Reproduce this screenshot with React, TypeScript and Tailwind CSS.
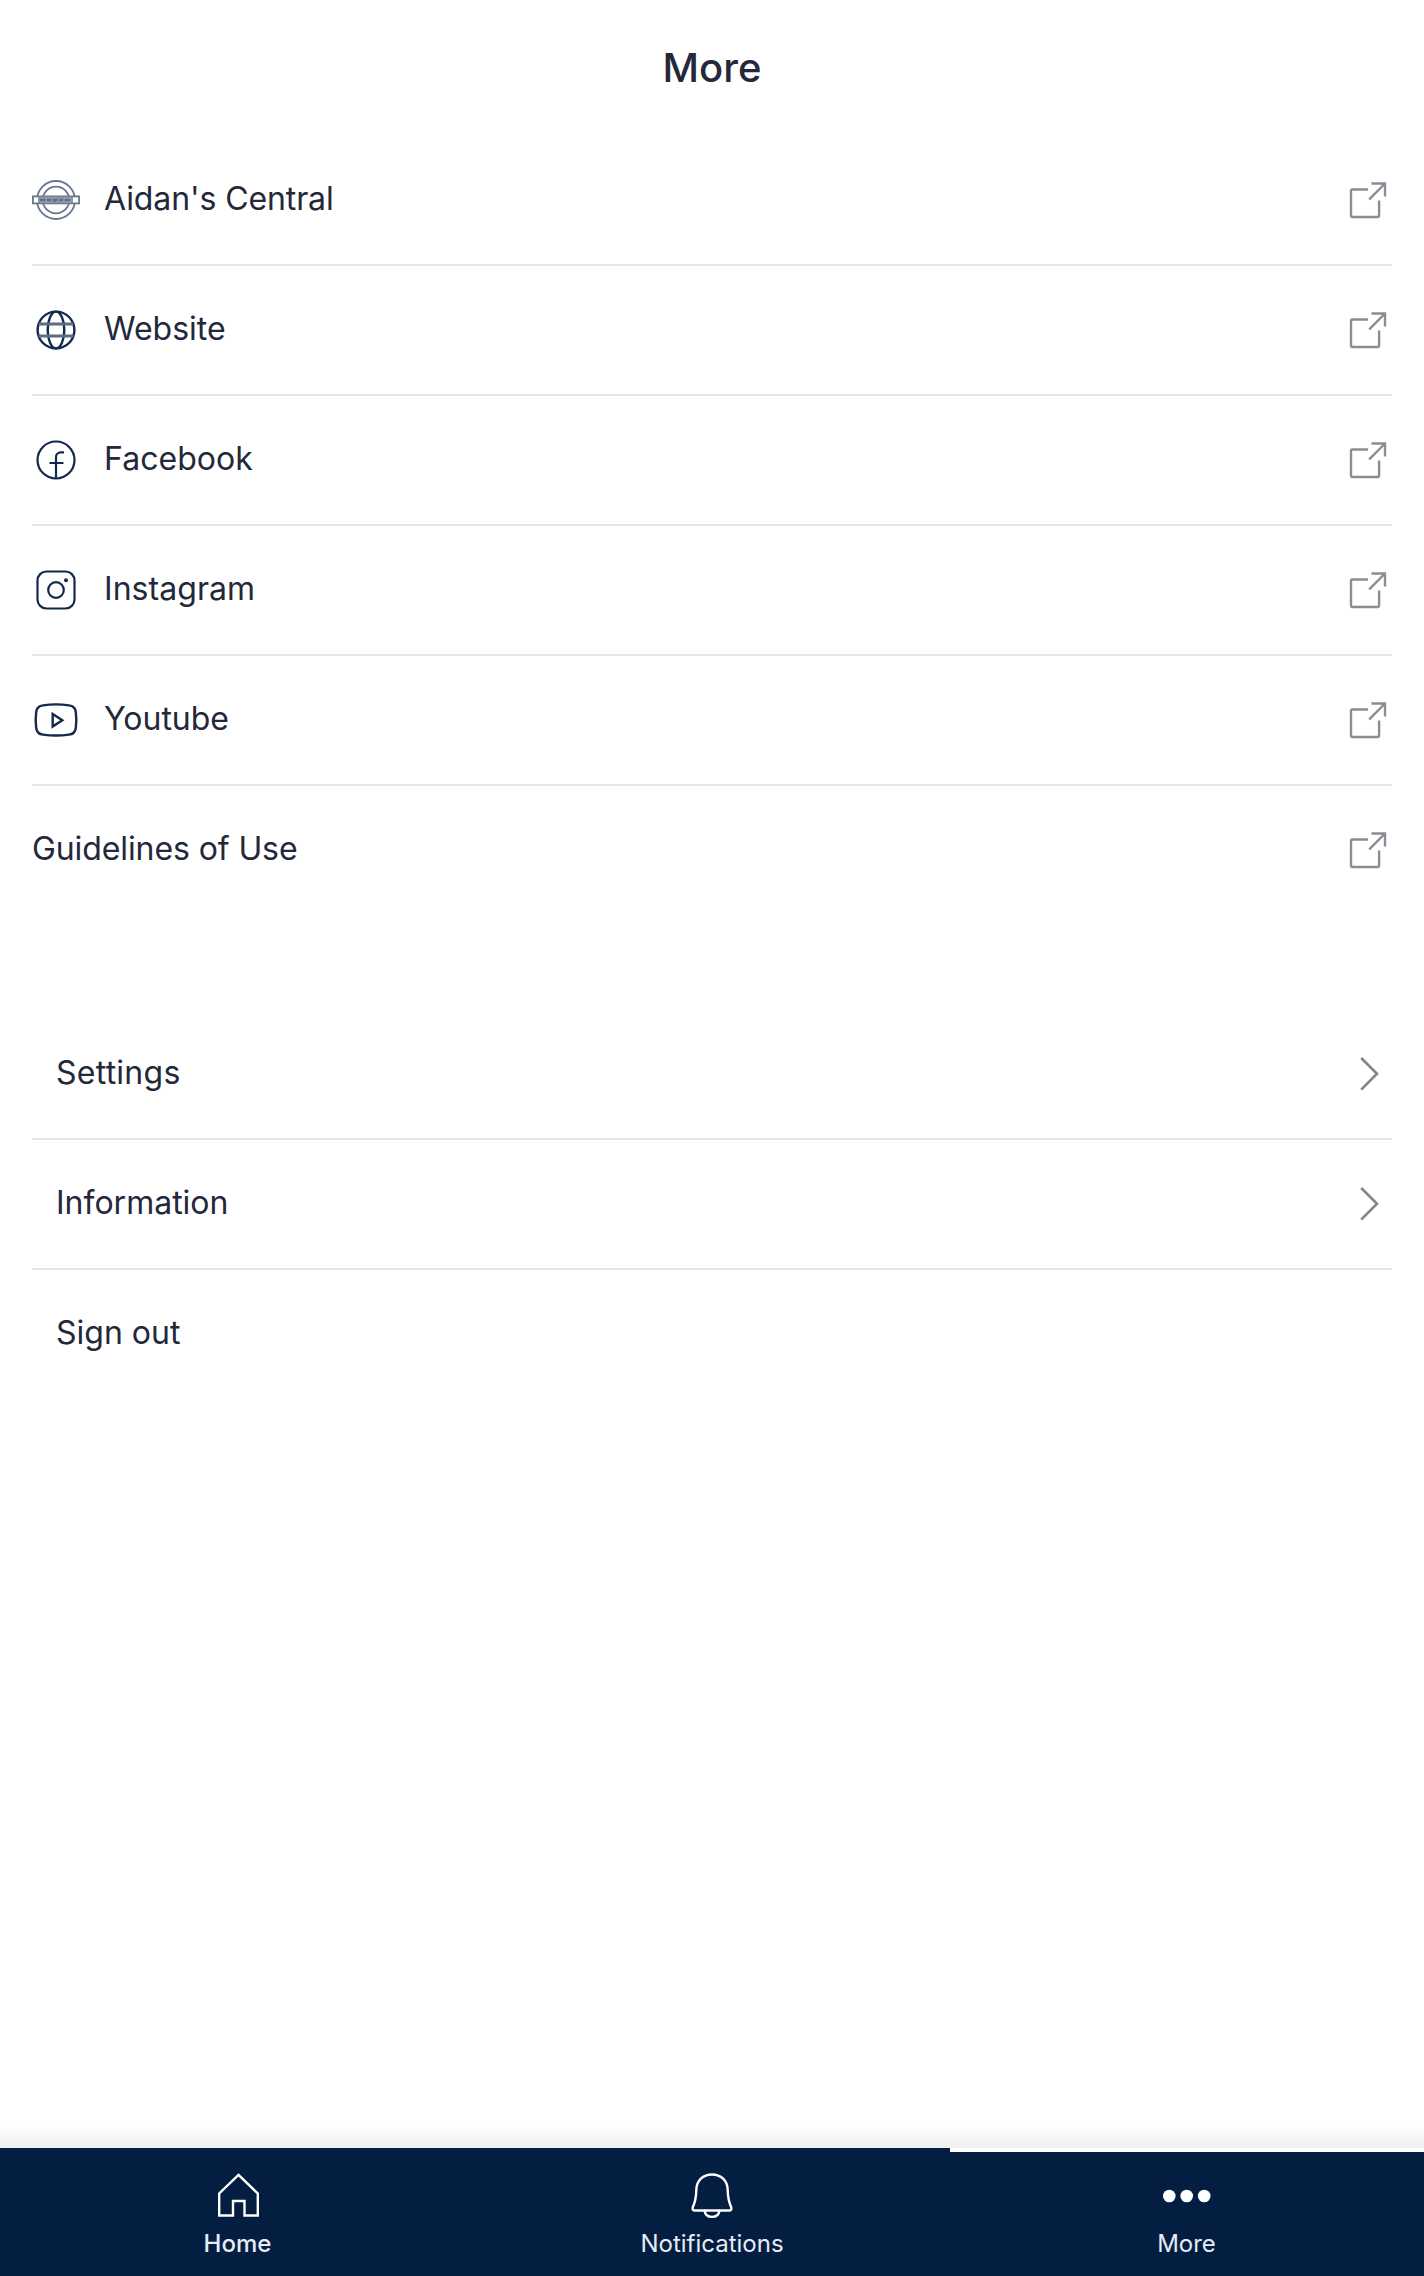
import type { ReactNode } from "react";

function Icon({ children, className = "", sw = 2.4 }: { children: ReactNode; className?: string; sw?: number }) {
  return (
    <svg
      width="48"
      height="48"
      viewBox="0 0 48 48"
      fill="none"
      stroke="currentColor"
      strokeWidth={sw}
      className={"shrink-0 " + className}
    >
      {children}
    </svg>
  );
}

const crest = (
  <Icon className="text-[#67778b]" sw={1.8}>
    <circle cx="24" cy="24" r="19" />
    <circle cx="24" cy="24" r="13.3" />
    <rect x="0.9" y="20.4" width="46.2" height="7" fill="white" />
    <rect x="6" y="20.6" width="35" height="6.6" fill="#8996a6" stroke="none" />
    <path d="M8 24h5M15 24h4M21 23l2 2 2-2M27 24h4M33 24h5" stroke="#5c6d82" strokeWidth="2" />
  </Icon>
);
const globe = (
  <Icon className="text-[#13294b]">
    <circle cx="24" cy="24" r="18.4" />
    <ellipse cx="24" cy="24" rx="8.3" ry="18.4" />
    <path d="M6.5 18h35M6.5 30h35" stroke="#5d6b81" strokeWidth="3" />
  </Icon>
);
const facebook = (
  <Icon className="text-[#13294b]" sw={2.2}>
    <circle cx="24" cy="24" r="18.5" />
    <path d="M24 42.5V21a4.6 4.6 0 0 1 4.6-4.6H32M17.5 27h14" />
  </Icon>
);
const instagram = (
  <Icon className="text-[#13294b]" sw={2.2}>
    <rect x="5.5" y="5.5" width="37" height="37" rx="9" />
    <circle cx="24" cy="24" r="7.8" />
    <circle cx="34" cy="14.2" r="2" fill="currentColor" stroke="none" />
  </Icon>
);
const youtube = (
  <Icon className="text-[#13294b]">
    <path d="M11 9.4Q24 7.4 37 9.4Q43 10 43.8 16Q44.9 24 43.8 32Q43 38 37 38.6Q24 40.4 11 38.6Q5 38 4.2 32Q3.1 24 4.2 16Q5 10 11 9.4Z" />
    <path d="M20.7 18v12.6l9.6-6.3Z" />
  </Icon>
);

function ExternalIcon() {
  return (
    <Icon className="text-[#8b8d95]">
      <path d="M24 13.5H8.2a1.2 1.2 0 0 0-1.2 1.2v25.1a1.2 1.2 0 0 0 1.2 1.2h25.7a1.2 1.2 0 0 0 1.2-1.2V24.5" />
      <path d="M27.5 7.5H41V20.5M40.5 8L25.2 23.3" />
    </Icon>
  );
}

function ChevronIcon() {
  return (
    <Icon className="text-[#85878f]" sw={2.7}>
      <path d="M17.2 8L33 23.8L17.2 39.6" />
    </Icon>
  );
}

const links: { label: string; icon?: ReactNode; tracking: string }[] = [
  { label: "Aidan's Central", icon: crest, tracking: "tracking-[-0.1px]" },
  { label: "Website", icon: globe, tracking: "tracking-normal" },
  { label: "Facebook", icon: facebook, tracking: "tracking-[0.05px]" },
  { label: "Instagram", icon: instagram, tracking: "tracking-[0.05px]" },
  { label: "Youtube", icon: youtube, tracking: "tracking-normal" },
  { label: "Guidelines of Use", tracking: "tracking-[-0.1px]" },
];

const actions = [
  { label: "Settings", chevron: true, tracking: "tracking-[0.25px]" },
  { label: "Information", chevron: true, tracking: "tracking-normal" },
  { label: "Sign out", chevron: false, tracking: "tracking-normal" },
];

const rowClass =
  "flex h-[130px] w-full items-center border-b-2 border-[#e6e6e8] text-left text-[32px] leading-[48px] last:border-transparent";

export default function App() {
  return (
    <div className="flex h-[2276px] w-[1424px] flex-col bg-white font-['Inter',sans-serif] text-[#23283a]">
      <header className="flex h-[136px] items-center justify-center">
        <h1 className="text-[40px] leading-[48px] font-medium">More</h1>
      </header>

      <main className="flex-1 px-8">
        <ul>
          {links.map(({ label, icon, tracking }) => (
            <li key={label} className={rowClass}>
              {icon}
              <span className={`flex-1 pb-0.5 ${tracking} ${icon ? "ml-6" : ""}`}>{label}</span>
              <ExternalIcon />
            </li>
          ))}
        </ul>
        <ul className="mt-[94px]">
          {actions.map(({ label, chevron, tracking }) => (
            <li key={label} className={rowClass}>
              <span className={`ml-6 flex-1 pb-0.5 ${tracking}`}>{label}</span>
              {chevron && <ChevronIcon />}
            </li>
          ))}
        </ul>
      </main>

      <div className="h-6 bg-linear-to-b from-white to-[#f0f0f0]" />
      <nav className="grid h-32 grid-cols-[475px_475px_474px] bg-[#041e42] text-[24px] leading-8 text-[#e6ecf5]">
        <a className="flex flex-col items-center gap-[9px] pt-[23px] font-medium">
          <Icon className="text-white" sw={2.4}>
            <path d="M24.5 3.8L43.8 22.5V44.5H30.5V30H19V44.5H5.2V22.5Z" />
          </Icon>
          <span>Home</span>
        </a>
        <a className="flex flex-col items-center gap-[9px] pt-[23px] pr-px">
          <Icon className="text-white" sw={2.4}>
            <path d="M24 3.5C15 3.5 8.5 9.5 8.3 19C8.2 27 7.500 30.5 4.7 36.5Q4 39.5 7 39.5H41Q44 39.5 43.3 36.5C40.5 30.5 39.8 27 39.7 19C39.5 9.5 33 3.5 24 3.5Z" />
            <path d="M16.500 39.5C17 43.5 20 45.9 24 45.9S31 43.5 31.5 39.5" />
          </Icon>
          <span>Notifications</span>
        </a>
        <a className="flex flex-col items-center gap-[9px] border-t-4 border-white pt-[19px] pr-px">
          <Icon className="text-white">
            <g fill="currentColor" stroke="none">
              <circle cx="6.3" cy="25" r="6.3" />
              <circle cx="23.7" cy="25" r="6.3" />
              <circle cx="41.2" cy="25" r="6.3" />
            </g>
          </Icon>
          <span>More</span>
        </a>
      </nav>
    </div>
  );
}
